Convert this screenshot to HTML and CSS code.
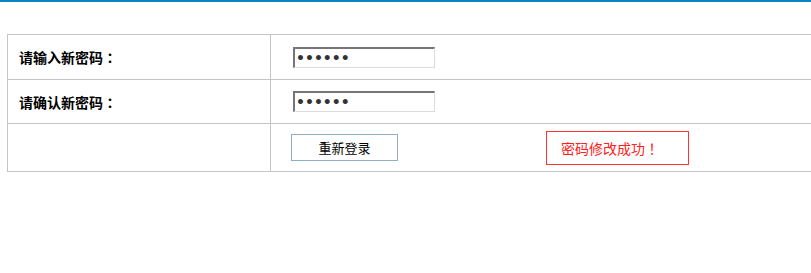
FILE: index.html
```html
<!DOCTYPE html>
<html lang="zh-CN">
<head>
    <meta charset="UTF-8">
    <title>修改密码</title>
    <link rel="stylesheet" href="styles.css">
</head>
<body>
    <div class="top-line"></div>
    <div class="page">
        <table class="pwd-table">
            <tr class="row-first">
                <td class="label">请输入新密码<span class="punct" lang="zh-TW">：</span></td>
                <td class="field"><input type="password" class="pwd-input" value="123456"></td>
            </tr>
            <tr>
                <td class="label">请确认新密码<span class="punct" lang="zh-TW">：</span></td>
                <td class="field"><input type="password" class="pwd-input" value="123456"></td>
            </tr>
            <tr class="action-row">
                <td class="label"></td>
                <td class="field">
                    <div class="actions">
                        <button class="btn-login">重新登录</button>
                        <div class="msg-ok">密码修改成功<span class="punct" lang="zh-TW">！</span></div>
                    </div>
                </td>
            </tr>
        </table>
    </div>
</body>
</html>
```

FILE: styles.css
```css
body {
    margin: 0;
    font-family: "Noto Sans CJK SC", "Liberation Sans", sans-serif;
    font-size: 13px;
    color: #000;
    background: #fff;
    overflow: hidden;
}
.top-line {
    height: 2px;
    background-color: #0a87c0;
}
.page {
    padding: 32px 0 0 7px;
}
.pwd-table {
    border-collapse: collapse;
    width: 830px;
}
.pwd-table td {
    border: 1px solid #c4c4c4;
    height: 43px;
    padding: 0;
    vertical-align: middle;
}
.pwd-table .row-first td {
    height: 44px;
}
.pwd-table .label {
    width: 251px;
    padding-left: 11px;
    font-weight: bold;
    font-size: 14px;
}
.pwd-table .field {
    padding-left: 20px;
}
.pwd-table .action-row td {
    height: 47px;
}
/* full-width punctuation centred in its box */
.punct {
    font-family: "Noto Sans CJK TC", sans-serif;
}
.pwd-input {
    display: block;
    box-sizing: border-box;
    width: 142px;
    height: 21px;
    margin: 0 0 0 2px;
    padding: 0 1px;
    border-top: 2px solid #767676;
    border-left: 2px solid #767676;
    border-right: 1px solid #dcdcdc;
    border-bottom: 1px solid #dcdcdc;
    background: #fff;
    font-family: "DejaVu Sans", sans-serif;
    font-weight: bold;
    font-size: 14px;
    color: #333;
}
.actions {
    display: flex;
    align-items: center;
}
.btn-login {
    width: 107px;
    height: 27px;
    background: #fff;
    border: 1px solid #8fb0c4;
    font-family: "Noto Sans CJK SC", sans-serif;
    font-size: 13px;
    color: #000;
    padding: 0;
}
.msg-ok {
    margin-left: 148px;
    box-sizing: border-box;
    width: 143px;
    height: 34px;
    border: 1px solid #ff3333;
    color: #ff2020;
    font-size: 14px;
    line-height: 32px;
    padding-left: 14px;
}
```
